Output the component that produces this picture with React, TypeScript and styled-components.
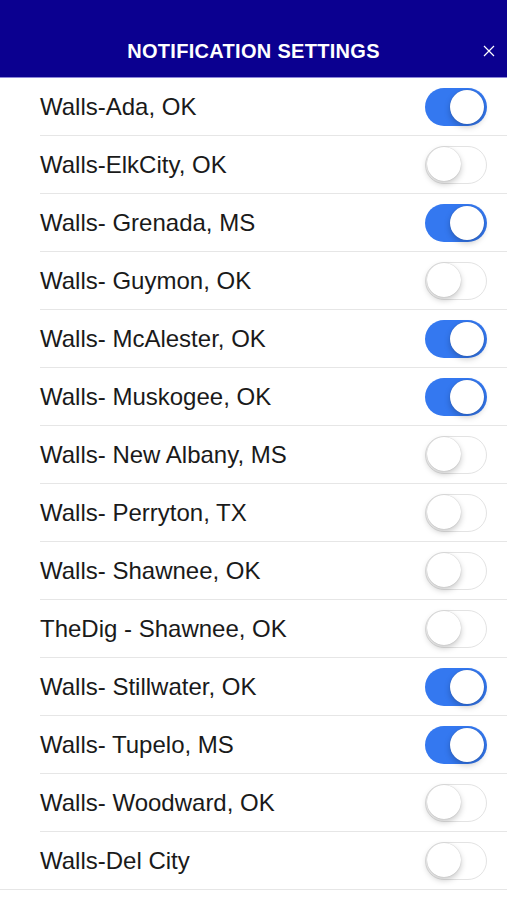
import React, { useState } from "react";
import styled, { createGlobalStyle } from "styled-components";

const Global = createGlobalStyle`
  html, body { margin: 0; padding: 0; background: #ffffff; }
  body { font-family: "Liberation Sans", Arial, sans-serif; }
`;

const Page = styled.div`
  width: 507px;
  min-height: 900px;
  background: #ffffff;
`;

const Header = styled.header`
  height: 78px;
  background: #0b0090;
  border-bottom: 1px solid #8c86d8;
  box-sizing: border-box;
  display: grid;
  grid-template-columns: 60px 1fr 60px;
  align-items: end;
  padding-bottom: 15px;
`;

const Title = styled.h1`
  grid-column: 2;
  margin: 0;
  text-align: center;
  color: #ffffff;
  font-family: "Liberation Sans", Arial, sans-serif;
  font-weight: 700;
  font-size: 20px;
  letter-spacing: 0.3px;
  line-height: 22px;
`;

const Close = styled.button`
  grid-column: 3;
  justify-self: end;
  margin-right: 11px;
  background: none;
  border: none;
  padding: 0;
  width: 14px;
  height: 22px;
  display: flex;
  align-items: center;
  justify-content: center;
  cursor: pointer;
`;

const List = styled.ul`
  list-style: none;
  margin: 0;
  padding: 0 0 0 40px;
`;

const Row = styled.li<{ $last?: boolean }>`
  height: 58px;
  box-sizing: border-box;
  display: flex;
  align-items: center;
  justify-content: space-between;
  padding-right: 20px;
  border-bottom: 1px solid #e6e6e6;
  ${(p) => (p.$last ? "margin-left: -40px; padding-left: 40px;" : "")}
`;

const Label = styled.span`
  font-family: "Liberation Sans", Arial, sans-serif;
  font-size: 24px;
  color: #1a1a1a;
`;

const Track = styled.button<{ $on: boolean }>`
  position: relative;
  width: 62px;
  height: 38px;
  border-radius: 19px;
  padding: 0;
  box-sizing: border-box;
  border: ${(p) => (p.$on ? "none" : "1.5px solid #e3e3e3")};
  background: ${(p) => (p.$on ? "#3478f0" : "#ffffff")};
  cursor: pointer;
`;

const Knob = styled.span<{ $on: boolean }>`
  position: absolute;
  top: ${(p) => (p.$on ? "2px" : "0.5px")};
  left: ${(p) => (p.$on ? "25px" : "0.5px")};
  width: 34px;
  height: 34px;
  border-radius: 50%;
  background: #ffffff;
  box-shadow: 0 3px 6px rgba(0, 0, 0, 0.22), 0 0 1px rgba(0, 0, 0, 0.25);
`;

const initial: [string, boolean][] = [
  ["Walls-Ada, OK", true],
  ["Walls-ElkCity, OK", false],
  ["Walls- Grenada, MS", true],
  ["Walls- Guymon, OK", false],
  ["Walls- McAlester, OK", true],
  ["Walls- Muskogee, OK", true],
  ["Walls- New Albany, MS", false],
  ["Walls- Perryton, TX", false],
  ["Walls- Shawnee, OK", false],
  ["TheDig - Shawnee, OK", false],
  ["Walls- Stillwater, OK", true],
  ["Walls- Tupelo, MS", true],
  ["Walls- Woodward, OK", false],
  ["Walls-Del City", false],
];

export default function App() {
  const [items, setItems] = useState(initial);
  return (
    <Page>
      <Global />
      <Header>
        <Title>NOTIFICATION SETTINGS</Title>
        <Close aria-label="close">
          <svg width="12" height="12" viewBox="0 0 12 12">
            <path d="M1 1 L11 11 M11 1 L1 11" stroke="#ffffff" strokeWidth="1.2" />
          </svg>
        </Close>
      </Header>
      <List>
        {items.map(([name, on], i) => (
          <Row key={name} $last={i === items.length - 1}>
            <Label>{name}</Label>
            <Track
              $on={on}
              onClick={() =>
                setItems((prev) => prev.map((it, j) => (j === i ? [it[0], !it[1]] : it)))
              }
            >
              <Knob $on={on} />
            </Track>
          </Row>
        ))}
      </List>
    </Page>
  );
}
